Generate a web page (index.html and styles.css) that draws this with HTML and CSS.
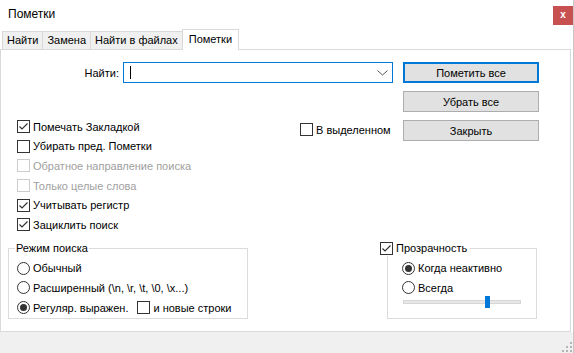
FILE: index.html
```html
<!DOCTYPE html>
<html>
    <head>
        <title>Пометки</title>
        <link rel="stylesheet" href="styles.css">
    </head>
    <body>
        <div class="window">
            <div class="titlebar">
                <span class="title">Пометки</span>
                <span class="close">x</span>
            </div>
            <div class="tabs">
                <div class="tab">Найти</div>
                <div class="tab">Замена</div>
                <div class="tab">Найти в файлах</div>
                <div class="tab tab-active">Пометки</div>
            </div>
            <div class="panel">
                <div class="top">
                    <div class="left">
                        <div class="findrow">
                            <span class="findlabel">Найти:</span>
                            <div class="combo">
                                <span class="caret"></span>
                                <svg class="chev" width="11" height="6" viewBox="0 0 11 6">
                                    <polyline points="0.5,0.5 5.5,5 10.5,0.5" fill="none" stroke="#555" stroke-width="1"/>
                                </svg>
                            </div>
                        </div>
                        <div class="opts">
                            <div class="checks">
                                <div class="row"><span class="box on"></span>Помечать Закладкой</div>
                                <div class="row"><span class="box"></span>Убирать пред. Пометки</div>
                                <div class="row off"><span class="box"></span>Обратное направление поиска</div>
                                <div class="row off"><span class="box"></span>Только целые слова</div>
                                <div class="row"><span class="box on"></span>Учитывать регистр</div>
                                <div class="row"><span class="box on"></span>Зациклить поиск</div>
                            </div>
                            <div class="insel">
                                <div class="row"><span class="box"></span>В выделенном</div>
                            </div>
                        </div>
                    </div>
                    <div class="buttons">
                        <button class="btn btn-default">Пометить все</button>
                        <button class="btn">Убрать все</button>
                        <button class="btn">Закрыть</button>
                    </div>
                </div>
                <div class="groups">
                    <div class="group mode">
                        <div class="legend">Режим поиска</div>
                        <div class="list">
                            <div class="row"><span class="radio"></span>Обычный</div>
                            <div class="row"><span class="radio"></span>Расширенный (\n, \r, \t, \0, \x...)</div>
                            <div class="row"><span class="radio on"></span>Регуляр. выражен.<span class="box newlines"></span>и новые строки</div>
                        </div>
                    </div>
                    <div class="group transp">
                        <div class="legend"><span class="box on"></span>Прозрачность</div>
                        <div class="list">
                            <div class="row"><span class="radio on"></span>Когда неактивно</div>
                            <div class="row"><span class="radio"></span>Всегда</div>
                        </div>
                        <div class="track"><span class="thumb"></span></div>
                    </div>
                </div>
            </div>
            <div class="footer">
                <svg class="grip" width="10" height="10" viewBox="0 0 10 10">
                    <rect x="8" y="0" width="2" height="2" fill="#b4b4b4"/>
                    <rect x="4" y="4" width="2" height="2" fill="#b4b4b4"/>
                    <rect x="8" y="4" width="2" height="2" fill="#b4b4b4"/>
                    <rect x="0" y="8" width="2" height="2" fill="#b4b4b4"/>
                    <rect x="4" y="8" width="2" height="2" fill="#b4b4b4"/>
                    <rect x="8" y="8" width="2" height="2" fill="#b4b4b4"/>
                </svg>
            </div>
        </div>
    </body>
</html>
```

FILE: styles.css
```css
html,body {
    margin:0;
}
body {
    font-family: "Liberation Sans", Arial, sans-serif;
    font-size: 11px;
    color: #000;
    background: #fff;
}
.window {
    width: 574px;
    height: 353px;
    box-sizing: border-box;
    border-right: 1px solid #c8c8c8;
    display: flex;
    flex-direction: column;
    background: #fff;
}
/* title bar */
.titlebar {
    height: 29px;
    display: flex;
    justify-content: space-between;
    align-items: flex-start;
}
.title {
    margin: 7px 0 0 8px;
    font-size: 12px;
}
.close {
    margin-top: 6px;
    width: 20px;
    height: 19px;
    background: #c75050;
    color: #fff;
    font-weight: 700;
    font-size: 10px;
    line-height: 17px;
    text-align: center;
}
/* tabs */
.tabs {
    height: 20px;
    display: flex;
    align-items: flex-end;
    padding-left: 2px;
}
.tab {
    height: 18px;
    box-sizing: border-box;
    padding: 0 4px;
    line-height: 17px;
    background: #f0f0f0;
    border: 1px solid #d9d9d9;
    border-bottom: none;
    margin-right: -1px;
}
.tab-active {
    height: 21px;
    line-height: 18px;
    background: #fff;
    margin-bottom: -1px;
    padding: 0 6px;
    position: relative;
}
/* main panel */
.panel {
    width: 571px;
    height: 283px;
    box-sizing: border-box;
    border: 1px solid #d9d9d9;
    display: flex;
    flex-direction: column;
}
.top {
    display: flex;
}
.left {
    width: 392px;
    padding-top: 12px;
}
.findrow {
    display: flex;
    align-items: center;
    height: 21px;
}
.findlabel {
    width: 118px;
    text-align: right;
    margin-right: 4px;
}
.combo {
    width: 270px;
    height: 21px;
    box-sizing: border-box;
    border: 1px solid #0078d7;
    display: flex;
    align-items: center;
    justify-content: space-between;
    padding: 0 4px 0 6px;
}
.caret {
    width: 1px;
    height: 13px;
    background: #000;
}
.opts {
    margin-top: 34px;
    display: grid;
    grid-template-columns: 299px 1fr;
}
.checks {
    padding-left: 16px;
}
.insel {
    padding-top: 3px;
}
.row {
    height: 19.6px;
    display: flex;
    align-items: center;
    white-space: nowrap;
}
.row.off {
    color: #a0a0a0;
}
.box {
    width: 13px;
    height: 13px;
    box-sizing: border-box;
    border: 1px solid #333;
    margin-right: 3px;
    flex: none;
    background: #fff;
}
.off .box {
    border-color: #cccccc;
}
.box.on {
    background: #fff url("data:image/svg+xml;utf8,<svg xmlns='http://www.w3.org/2000/svg' width='11' height='11'><polyline points='1.5,5.5 4,8 9.5,2.5' fill='none' stroke='%23333' stroke-width='1.2'/></svg>") no-repeat center;
}
.radio {
    width: 13px;
    height: 13px;
    box-sizing: border-box;
    border: 1px solid #333;
    border-radius: 50%;
    margin-right: 3px;
    flex: none;
    display: flex;
    align-items: center;
    justify-content: center;
}
.radio.on::after {
    content: "";
    width: 7px;
    height: 7px;
    border-radius: 50%;
    background: #333;
}
.newlines {
    margin-left: 9px;
}
/* buttons */
.buttons {
    margin-left: 10px;
    padding-top: 12px;
    display: flex;
    flex-direction: column;
    gap: 8px;
}
.btn {
    width: 136px;
    height: 21px;
    box-sizing: border-box;
    background: #e1e1e1;
    border: 1px solid #adadad;
    font-family: inherit;
    font-size: 11px;
    color: #000;
    padding: 0;
}
.btn-default {
    border: 2px solid #0078d7;
}
/* groups */
.groups {
    display: flex;
    margin-top: 13px;
}
.group {
    border: 1px solid #dcdcdc;
    box-sizing: border-box;
    height: 71px;
}
.legend {
    display: flex;
    align-items: center;
    width: max-content;
    height: 15px;
    margin-top: -8px;
    background: #fff;
}
.mode {
    width: 240px;
    margin-left: 7px;
    padding-left: 8px;
}
.mode .legend {
    margin-left: -2px;
    padding: 0 1px;
}
.list {
    padding-top: 3px;
}
.transp {
    width: 150px;
    margin-left: 139px;
    padding-left: 14px;
}
.transp .legend {
    margin-left: -22px;
    padding-right: 3px;
}
.track {
    width: 118px;
    height: 4px;
    box-sizing: border-box;
    margin: 2px 0 0 1px;
    background: #e7e7e7;
    border: 1px solid #d6d6d6;
    position: relative;
}
.thumb {
    position: absolute;
    left: 81px;
    top: -5px;
    width: 5px;
    height: 12px;
    background: #0078d7;
}
.footer {
    flex: 1;
    background: #f0f0f0;
    display: flex;
    justify-content: flex-end;
    align-items: flex-end;
}
.grip {
    margin: 0 1px 1px 0;
}
```
